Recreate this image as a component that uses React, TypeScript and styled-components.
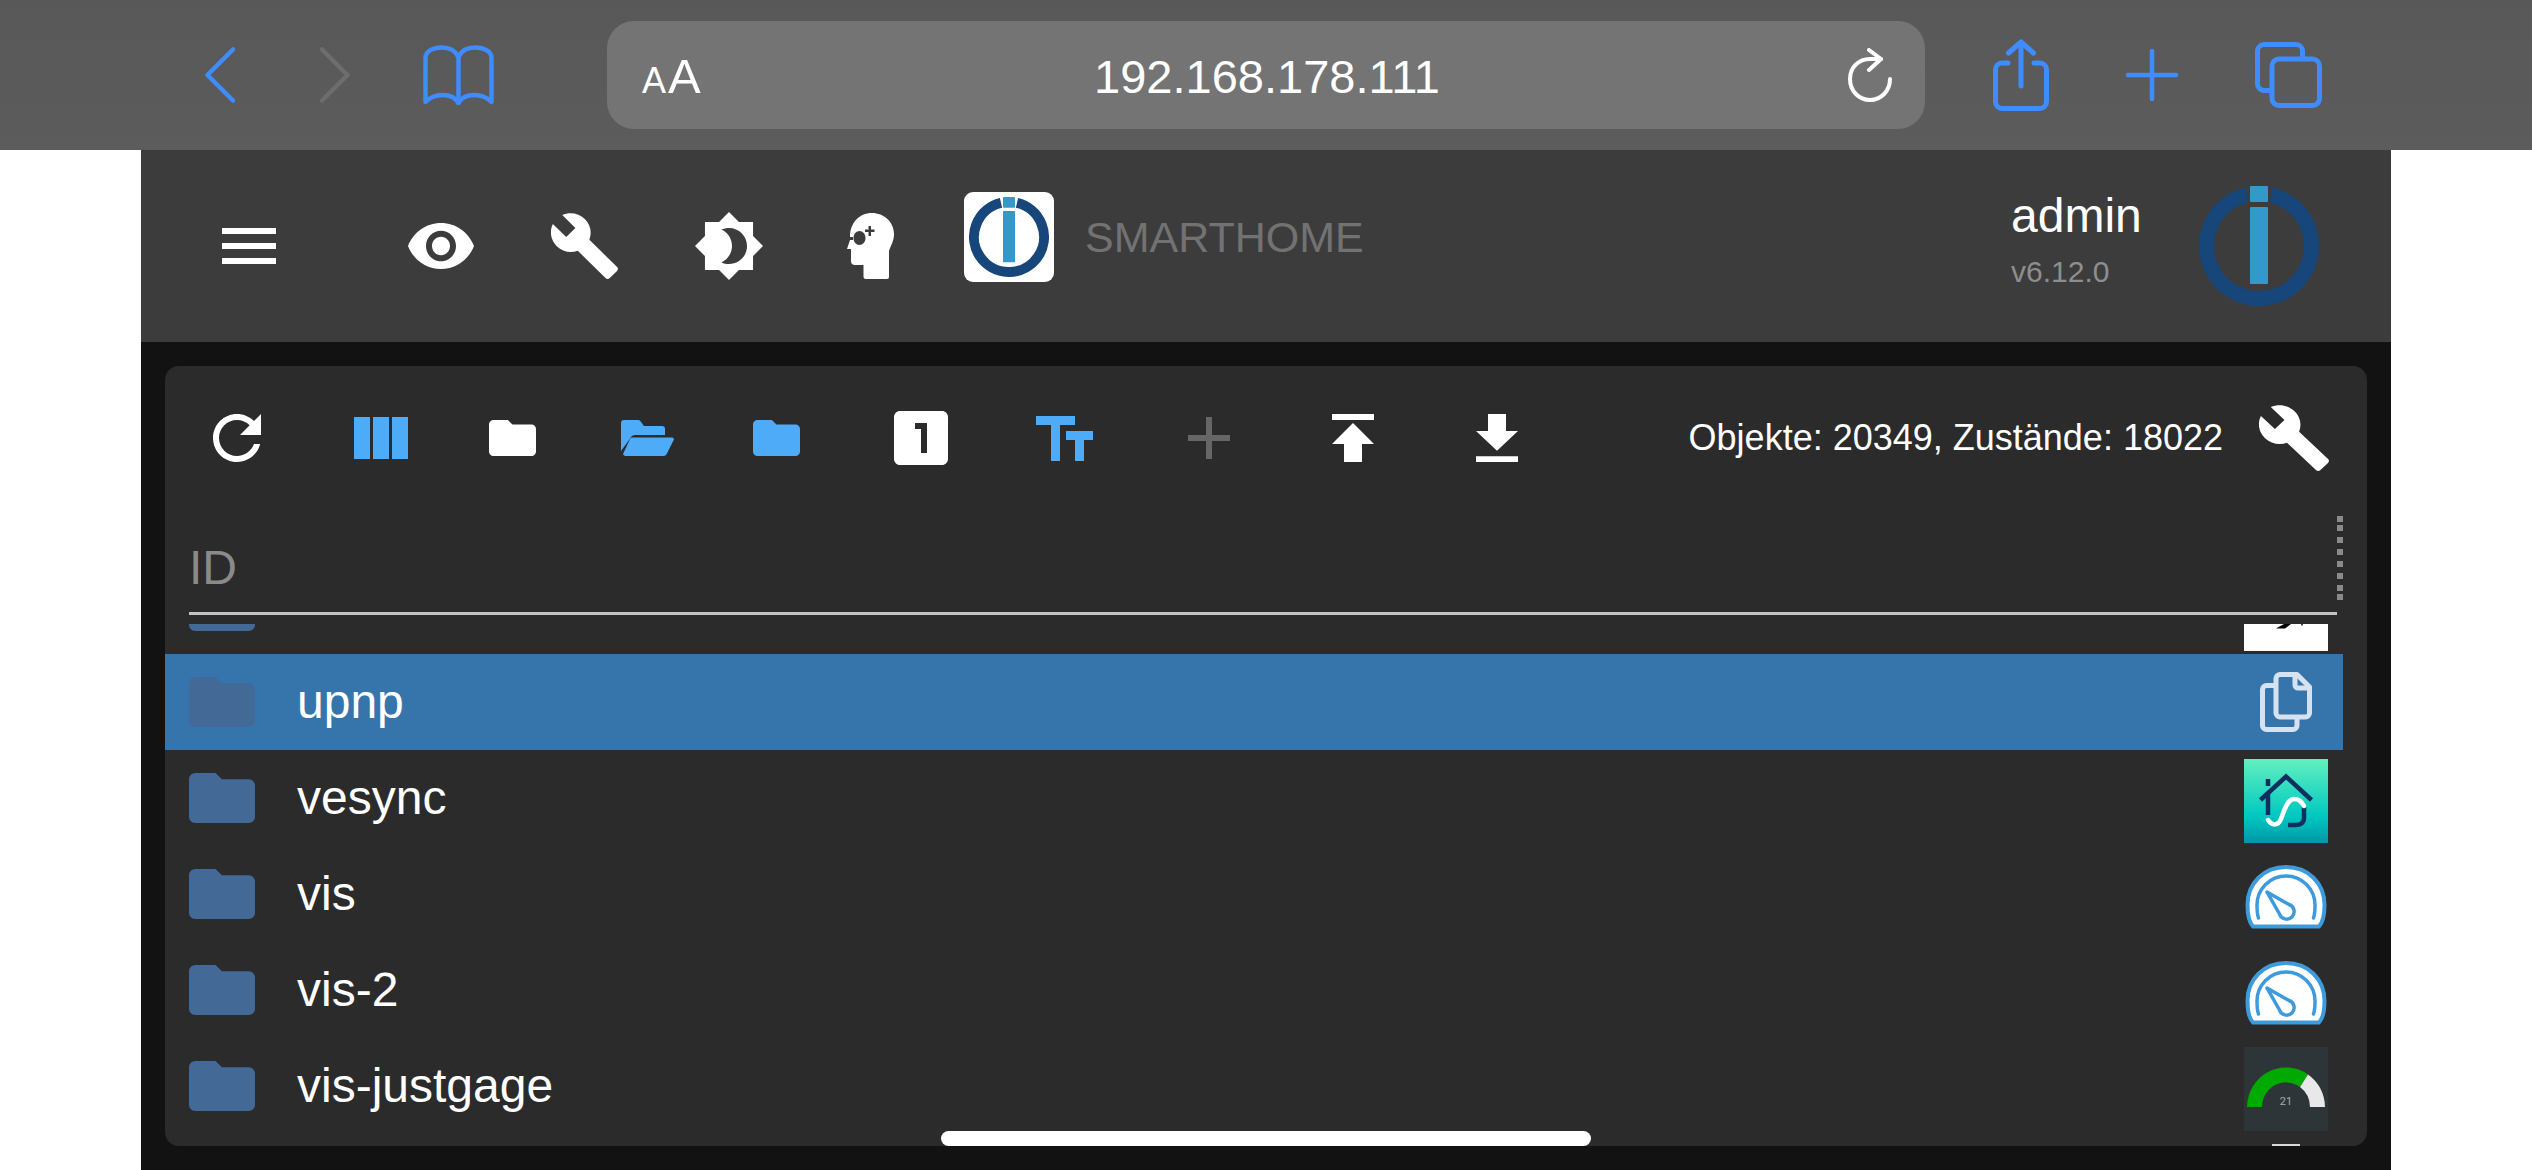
import React from "react";
import styled, { createGlobalStyle } from "styled-components";

const Global = createGlobalStyle`
  html, body { margin: 0; padding: 0; background: #fff; }
  body { font-family: "Liberation Sans", Arial, sans-serif; }
`;

const Screen = styled.div`
  position: relative;
  width: 2532px;
  height: 1170px;
  overflow: hidden;
  display: flex;
  flex-direction: column;
  background: #fff;
`;

const BrowserBar = styled.div`
  flex: 0 0 150px;
  display: flex;
  align-items: center;
  padding-left: 205px;
  background: linear-gradient(180deg, #585858, #5c5c5c);
`;

const NavSlot = styled.div<{ $gap: number }>`
  display: flex;
  margin-left: ${(p) => p.$gap}px;
`;

const UrlBar = styled.div`
  margin-left: 113px;
  width: 1318px;
  height: 108px;
  border-radius: 27px;
  background: #747474;
  display: grid;
  grid-template-columns: 1fr auto 1fr;
  align-items: center;
  padding: 0 33px 0 35px;
  box-sizing: border-box;
  color: #fff;
`;

const AaLabel = styled.div`
  display: flex;
  align-items: baseline;
  gap: 2px;
  line-height: 1;
  padding-top: 2px;
`;

const AaSmall = styled.span`
  font-size: 36px;
`;

const AaBig = styled.span`
  font-size: 49px;
`;

const UrlText = styled.div`
  font-size: 47px;
  line-height: 1;
  padding-top: 3px;
`;

const ReloadSlot = styled.div`
  display: flex;
  justify-content: flex-end;
`;

const Page = styled.div`
  flex: 1;
  min-height: 0;
  width: 2250px;
  margin-left: 141px;
  background: #121212;
  display: flex;
  flex-direction: column;
`;

const AppHeader = styled.header`
  flex: 0 0 192px;
  display: flex;
  align-items: center;
  padding: 0 72px 0 81px;
  background: #3c3c3c;
  box-sizing: border-box;
`;

const HeaderSlot = styled.div<{ $gap: number }>`
  display: flex;
  margin-left: ${(p) => p.$gap}px;
`;

const Burger = styled.div`
  width: 54px;
  display: flex;
  flex-direction: column;
  gap: 9px;
`;

const BurgerLine = styled.span`
  height: 6px;
  background: #fff;
`;

const Brand = styled.div`
  display: flex;
  align-items: center;
  margin: 0 0 18px 70px;
`;

const BrandTile = styled.div`
  width: 90px;
  height: 90px;
  border-radius: 9px;
  background: #fff;
  display: flex;
  align-items: center;
  justify-content: center;
`;

const BrandName = styled.div`
  margin-left: 31px;
  font-size: 43px;
  line-height: 1;
  color: #727272;
`;

const UserBlock = styled.div`
  margin-left: auto;
  width: 188px;
  margin-bottom: 14px;
  display: flex;
  flex-direction: column;
`;

const UserName = styled.div`
  font-size: 48px;
  line-height: 54px;
  color: #fff;
`;

const UserVersion = styled.div`
  margin-top: 12px;
  font-size: 30px;
  line-height: 34px;
  color: #8e8e8e;
`;

const Content = styled.main`
  flex: 1;
  min-height: 0;
  padding: 24px;
  display: flex;
`;

const Panel = styled.section`
  flex: 1;
  min-height: 0;
  display: flex;
  flex-direction: column;
  border-radius: 14px;
  background: #2b2b2b;
  overflow: hidden;
`;

const Toolbar = styled.div`
  flex: 0 0 144px;
  display: grid;
  grid-template-columns: 144px 144px 119px 151px 107px 182px 105px 184px 104px 184px 1fr;
  align-items: center;
  justify-items: center;
`;

const ToolRight = styled.div`
  justify-self: stretch;
  display: flex;
  align-items: center;
  justify-content: flex-end;
  gap: 36px;
  padding-right: 38px;
`;

const Counter = styled.div`
  font-size: 36px;
  line-height: 1;
  color: #fff;
  white-space: nowrap;
`;

const TableHead = styled.div`
  flex: 0 0 105px;
  width: 2178px;
  margin-bottom: 9px;
  padding-left: 24px;
  box-sizing: border-box;
  display: flex;
`;

const IdField = styled.div`
  flex: 1;
  border-bottom: 3px solid #c4c4c4;
  display: flex;
  align-items: center;
  padding-top: 12px;
  box-sizing: border-box;
  font-size: 48px;
  color: #8a8a8a;
`;

const Handle = styled.svg`
  flex: 0 0 6px;
  margin-top: 6px;
`;

const List = styled.div`
  flex: 1;
  min-height: 0;
  width: 2178px;
  overflow: hidden;
  display: flex;
  flex-direction: column;
`;

const Row = styled.div<{ $selected?: boolean; $scrolled?: boolean }>`
  flex: 0 0 96px;
  display: flex;
  align-items: center;
  padding: 0 15px 0 24px;
  margin-top: ${(p) => (p.$scrolled ? "-66px" : "0")};
  background: ${(p) => (p.$selected ? "#3675ab" : "transparent")};
`;

const RowName = styled.div`
  margin-left: 42px;
  flex: 1;
  font-size: 48px;
  line-height: 1;
  color: #fff;
`;

const Tile = styled.div<{ $selected?: boolean }>`
  width: 84px;
  height: 84px;
  align-self: flex-start;
  margin-top: ${(p) => (p.$selected ? "6px" : "9px")};
  display: flex;
  align-items: center;
  justify-content: center;
`;

const HomeBar = styled.div`
  position: absolute;
  left: 50%;
  bottom: 24px;
  width: 650px;
  height: 15px;
  border-radius: 8px;
  background: #fff;
  transform: translateX(-50%);
`;

const BLUE = "#3e8cff";
const TOOL = "#4dabf7";
const P = {
  refresh:
    "M17.65 6.35C16.2 4.9 14.21 4 12 4c-4.42 0-7.99 3.58-7.99 8s3.57 8 7.99 8c3.73 0 6.84-2.55 7.73-6h-2.08c-.82 2.33-3.04 4-5.65 4-3.31 0-6-2.69-6-6s2.69-6 6-6c1.66 0 3.14.69 4.22 1.78L13 11h7V4l-2.35 2.35z",
  folder:
    "M10 4H4c-1.1 0-1.99.9-1.99 2L2 18c0 1.1.9 2 2 2h16c1.1 0 2-.9 2-2V8c0-1.1-.9-2-2-2h-8l-2-2z",
  one: "M19 3H5c-1.1 0-2 .9-2 2v14c0 1.1.9 2 2 2h14c1.1 0 2-.9 2-2V5c0-1.1-.9-2-2-2zm-5 14h-2V9h-2V7h4v10z",
  text: "M2.5 4v3h5v12h3V7h5V4h-13zm19 5h-9v3h3v7h3v-7h3V9z",
  add: "M19 13h-6v6h-2v-6H5v-2h6V5h2v6h6v2z",
  publish: "M5 4v2h14V4H5zm0 10h4v6h6v-6h4l-7-7-7 7z",
  download: "M19 9h-4V3H9v6H5l7 7 7-7zM5 18v2h14v-2H5z",
  wrench:
    "M22.7 19l-9.1-9.1c.9-2.3.4-5-1.5-6.9-2-2-5-2.4-7.4-1.3L9 6 6 9 1.6 4.7C.4 7.1.9 10.1 2.9 12.1c1.9 1.9 4.6 2.4 6.9 1.5l9.1 9.1c.4.4 1 .4 1.4 0l2.3-2.3c.5-.4.5-1.1.1-1.4z",
  eye: "M12 4.5C7 4.5 2.73 7.61 1 12c1.73 4.39 6 7.5 11 7.5s9.27-3.11 11-7.5c-1.73-4.39-6-7.5-11-7.5zM12 17c-2.76 0-5-2.24-5-5s2.24-5 5-5 5 2.24 5 5-2.24 5-5 5zm0-8c-1.66 0-3 1.34-3 3s1.34 3 3 3 3-1.34 3-3-1.34-3-3-3z",
  sun: "M20 8.69V4h-4.69L12 .69 8.69 4H4v4.69L.69 12 4 15.31V20h4.69L12 23.31 15.31 20H20v-4.69L23.31 12 20 8.69zM12 18c-.89 0-1.74-.2-2.5-.55C11.56 16.5 13 14.42 13 12s-1.44-4.5-3.5-5.45C10.26 6.2 11.11 6 12 6c3.31 0 6 2.69 6 6s-2.69 6-6 6z",
};

const Glyph = ({ d, vb, w, h, fill }: { d: string; vb: string; w: number; h: number; fill: string }) => (
  <svg width={w} height={h} viewBox={vb} preserveAspectRatio="none" fill={fill} fillRule="evenodd">
    <path d={d} />
  </svg>
);

const Folder = ({ w, h, fill }: { w: number; h: number; fill: string }) => (
  <Glyph d={P.folder} vb="2 4 20 16" w={w} h={h} fill={fill} />
);

const BackIcon = ({ color }: { color: string }) => (
  <svg width="30" height="56" viewBox="0 0 30 56" fill="none" stroke={color} strokeWidth="4.5" strokeLinecap="round" strokeLinejoin="round">
    <path d="M28 2.5 2.5 28 28 53.5" />
  </svg>
);

const ForwardIcon = ({ color }: { color: string }) => (
  <svg width="30" height="56" viewBox="0 0 30 56" fill="none" stroke={color} strokeWidth="4.5" strokeLinecap="round" strokeLinejoin="round">
    <path d="M2 2.5 27.5 28 2 53.5" />
  </svg>
);

const BookIcon = () => (
  <svg width="71" height="60" viewBox="0 0 71 60" fill="none" stroke={BLUE} strokeWidth="4.5" strokeLinejoin="round" strokeLinecap="round">
    <path d="M35.5 12C32 5 26 2.5 19 2.5 12 2.5 2.5 5 2.5 13v44c5-5 10-7 17-7 7 0 13 2.5 16 8 3-5.500 9-8 16-8 7 0 12 2 17 7V13c0-8-9.500-10.500-16.500-10.500-7 0-13.500 2.500-16.500 9.500Z" />
    <path d="M35.500 12v46" />
  </svg>
);

const ReloadIcon = () => (
  <svg width="44" height="54" viewBox="0 0 44 54" fill="none" stroke="#fff" strokeWidth="4" strokeLinecap="round" strokeLinejoin="round">
    <path d="M42 31c0 12-9 21-20 21S2 43 2 31s9-20 20-20h11" />
    <path d="M21 2l12 9-12 11" />
  </svg>
);

const ShareIcon = () => (
  <svg width="56" height="72" viewBox="0 0 56 72" fill="none" stroke={BLUE} strokeWidth="5" strokeLinecap="round" strokeLinejoin="round">
    <path d="M15 24H9a6.500 6.500 0 0 0-6.500 6.500V63A6.500 6.500 0 0 0 9 69.500h38a6.500 6.500 0 0 0 6.500-6.500V30.500A6.500 6.500 0 0 0 47 24h-6" />
    <path d="M28 47V3" />
    <path d="M15.500 14 28 3l12.500 11" />
  </svg>
);

const PlusIcon = () => (
  <svg width="52" height="52" viewBox="0 0 52 52" stroke={BLUE} strokeWidth="4.500" strokeLinecap="round">
    <path d="M26 2v48M2 26h48" />
  </svg>
);

const TabsIcon = () => (
  <svg width="67" height="66" viewBox="0 0 67 66" fill="none" stroke={BLUE} strokeWidth="5" strokeLinejoin="round">
    <path d="M16 48.500H9A6.500 6.500 0 0 1 2.500 42V9A6.500 6.500 0 0 1 9 2.500h32A6.500 6.500 0 0 1 47.500 9v7" />
    <rect x="17" y="17" width="47.500" height="46.500" rx="7" />
  </svg>
);

const LogoMark = ({ size }: { size: number }) => (
  <svg width={size} height={size} viewBox="0 0 120 120">
    <path d="M48 8.900A52.500 52.500 0 1 0 72 8.900" fill="none" stroke="#16467a" strokeWidth="15" />
    <rect x="51" y="0" width="18" height="16" rx="1" fill="#3399cc" />
    <rect x="51" y="21" width="18" height="77" rx="1" fill="#3399cc" />
  </svg>
);

const HeadIcon = () => (
  <svg width="47" height="66" viewBox="0 0 47 66" fill="#fff" fillRule="evenodd">
    <path d="M25 0C37 0 47 9 47 21c0 7-3 11-5 17v26a2 2 0 0 1-2 2H19a2.500 2.500 0 0 1-2.500-2.500V52H8a4 4 0 0 1-4-4V36H0l3-9h3v-3H3C3 10 12 0 25 0ZM12.500 18c-3.300 0-6 3-6 7s2.700 7 6 7 6-3 6-7-2.700-7-6-7Zm9-5v3.500H18v2.500h3.500v4H24v-4h3.500v-2.500H24V13Z" />
  </svg>
);

const OpenFolder = () => (
  <svg width="53" height="36" viewBox="0 0 53 36" fill={TOOL}>
    <path d="M0 3a3 3 0 0 1 3-3h14a3 3 0 0 1 2.500 1.300L23 6h18a3 3 0 0 1 3 3v6H14a5 5 0 0 0-4.500 3L0 31Z" />
    <path d="M11 17.500h40c1.500 0 2.300 1.200 1.700 2.500l-7 14a3.500 3.500 0 0 1-3 2H4.500C2.600 36 1.600 34.500 2.500 33L9 19a2.500 2.500 0 0 1 2-1.500Z" />
  </svg>
);

const ColumnsIcon = () => (
  <svg width="54" height="42" viewBox="0 0 54 42" fill={TOOL}>
    <rect x="0" width="16" height="42" />
    <rect x="19" width="16" height="42" />
    <rect x="38" width="16" height="42" />
  </svg>
);

const HandleDots = () => (
  <Handle width="6" height="84" viewBox="0 0 6 84" fill="#8a8a8a">
    {[0, 9, 21, 33, 45, 57, 69, 78].map((y) => (
      <rect key={y} y={y} width="6" height="6" />
    ))}
  </Handle>
);

const CutOffIcon = () => (
  <svg width="84" height="84" viewBox="0 0 84 84">
    <rect width="84" height="84" fill="#fff" />
    <path d="M32 61.500 40 57h7l-6 4.500Z" fill="#000" />
    <rect x="57" y="57" width="2" height="1.500" fill="#444" />
  </svg>
);

const CopyIcon = () => (
  <svg width="52" height="60" viewBox="0 0 52 60" fill="none" stroke="#d6e2ef" strokeWidth="5" strokeLinejoin="round">
    <path d="M20 2.500h17L49.500 15v26a4 4 0 0 1-4 4H20a4 4 0 0 1-4-4V6.500a4 4 0 0 1 4-4Z" />
    <path d="M35 2.500V13a3 3 0 0 0 3 3h11.500" />
    <path d="M16 13.500H6.500a4 4 0 0 0-4 4v36a4 4 0 0 0 4 4H33a4 4 0 0 0 4-4V45" />
  </svg>
);

const VesyncIcon = () => (
  <svg width="84" height="84" viewBox="0 0 84 84" fill="none">
    <defs>
      <linearGradient id="vesync" x1="0" y1="0" x2="0" y2="1">
        <stop offset="0" stopColor="#62f0c0" />
        <stop offset="0.68" stopColor="#00c8c0" />
        <stop offset="1" stopColor="#0097a8" />
      </linearGradient>
    </defs>
    <rect width="84" height="84" fill="url(#vesync)" />
    <g stroke="#0d3060" strokeWidth="4.500">
      <path d="M16.500 41 42 17.500 67.500 41" />
      <path d="M24 20v7M24 33v23" />
      <path d="M60 47v12c0 5-4 7-8 7h-8" />
    </g>
    <path d="M24 61c4 6 10 6 13-1 3-8 6-20 13-20 5 0 8 3 10 7" stroke="#fff" strokeWidth="4.500" strokeLinecap="round" />
  </svg>
);

const GaugeIcon = () => (
  <svg width="84" height="84" viewBox="0 0 84 84">
    <path d="M9 71.500C4 66 3.500 58 3.500 50 3.500 28 20 12 42 12s38.500 16 38.500 38c0 8-.5 16-5.500 21.500Z" fill="#fff" stroke="#3d9bdc" strokeWidth="4" />
    <path d="M14.500 63C13 59 13 55 13 50c0-16 13-29 29-29s29 13 29 29c0 5 0 9-1.500 13" fill="none" stroke="#3d9bdc" strokeWidth="3.500" strokeLinecap="round" />
    <path d="M23 37 45 49.500a7.500 7.500 0 1 1-9.500 9.500Z" fill="#fff" stroke="#3d9bdc" strokeWidth="3.500" strokeLinejoin="round" />
  </svg>
);

const JustGageIcon = () => (
  <svg width="84" height="84" viewBox="0 0 84 84">
    <rect width="84" height="84" fill="#2e3539" />
    <path d="M3 60a39 40 0 0 1 61-32.500L56 40A24 25 0 0 0 18 60Z" fill="#00aa00" />
    <path d="M64 27.500A39 40 0 0 1 81 60H66a24 25 0 0 0-10-20Z" fill="#e8e8e8" />
    <text x="42" y="58" textAnchor="middle" fontFamily="Roboto, sans-serif" fontSize="11" fill="#aaa">21</text>
  </svg>
);

const NextRowIcon = () => (
  <svg width="84" height="84" viewBox="0 0 84 84">
    <path d="M28 1h28v2H28Z" fill="#d8d8d8" />
  </svg>
);

const FOLDER_DIM = "#436a97";

type RowData = { name: string; icon: React.ReactNode; selected?: boolean; scrolled?: boolean };

const rows: RowData[] = [
  { name: "", icon: <CutOffIcon />, scrolled: true },
  { name: "upnp", icon: <CopyIcon />, selected: true },
  { name: "vesync", icon: <VesyncIcon /> },
  { name: "vis", icon: <GaugeIcon /> },
  { name: "vis-2", icon: <GaugeIcon /> },
  { name: "vis-justgage", icon: <JustGageIcon /> },
  { name: "", icon: <NextRowIcon /> },
];

export default function App() {
  return (
    <Screen>
      <Global />
      <BrowserBar>
        <BackIcon color={BLUE} />
        <NavSlot $gap={85}><ForwardIcon color="#6d6d6d" /></NavSlot>
        <NavSlot $gap={73}><BookIcon /></NavSlot>
        <UrlBar>
          <AaLabel><AaSmall>A</AaSmall><AaBig>A</AaBig></AaLabel>
          <UrlText>192.168.178.111</UrlText>
          <ReloadSlot><ReloadIcon /></ReloadSlot>
        </UrlBar>
        <NavSlot $gap={68}><ShareIcon /></NavSlot>
        <NavSlot $gap={77}><PlusIcon /></NavSlot>
        <NavSlot $gap={77}><TabsIcon /></NavSlot>
      </BrowserBar>
      <Page>
        <AppHeader>
          <Burger><BurgerLine /><BurgerLine /><BurgerLine /></Burger>
          <HeaderSlot $gap={132}><Glyph d={P.eye} vb="1 4.500 22 15" w={66} h={46} fill="#fff" /></HeaderSlot>
          <HeaderSlot $gap={77}><Glyph d={P.wrench} vb="1 1 22 22" w={67} h={66} fill="#fff" /></HeaderSlot>
          <HeaderSlot $gap={77}><Glyph d={P.sun} vb=".69 .69 22.620 22.620" w={68} h={68} fill="#fff" /></HeaderSlot>
          <HeaderSlot $gap={84}><HeadIcon /></HeaderSlot>
          <Brand>
            <BrandTile><LogoMark size={80} /></BrandTile>
            <BrandName>SMARTHOME</BrandName>
          </Brand>
          <UserBlock>
            <UserName>admin</UserName>
            <UserVersion>v6.12.0</UserVersion>
          </UserBlock>
          <LogoMark size={120} />
        </AppHeader>
        <Content>
          <Panel>
            <Toolbar>
              <Glyph d={P.refresh} vb="4 4 16 16" w={48} h={48} fill="#fff" />
              <ColumnsIcon />
              <Folder w={47} h={36} fill="#fff" />
              <OpenFolder />
              <Folder w={47} h={36} fill={TOOL} />
              <Glyph d={P.one} vb="3 3 18 18" w={54} h={54} fill="#fff" />
              <Glyph d={P.text} vb="2.500 4 19 15" w={57} h={45} fill={TOOL} />
              <Glyph d={P.add} vb="5 5 14 14" w={42} h={42} fill="#666" />
              <Glyph d={P.publish} vb="5 4 14 16" w={42} h={48} fill="#fff" />
              <Glyph d={P.download} vb="5 3 14 17" w={42} h={48} fill="#fff" />
              <ToolRight>
                <Counter>Objekte: 20349, Zustände: 18022</Counter>
                <Glyph d={P.wrench} vb="1 1 22 22" w={70} h={66} fill="#fff" />
              </ToolRight>
            </Toolbar>
            <TableHead>
              <IdField>ID</IdField>
              <HandleDots />
            </TableHead>
            <List>
              {rows.map((r, i) => (
                <Row key={i} $selected={r.selected} $scrolled={r.scrolled}>
                  <Folder w={66} h={50} fill={FOLDER_DIM} />
                  <RowName>{r.name}</RowName>
                  <Tile $selected={r.selected}>{r.icon}</Tile>
                </Row>
              ))}
            </List>
          </Panel>
        </Content>
      </Page>
      <HomeBar />
    </Screen>
  );
}
